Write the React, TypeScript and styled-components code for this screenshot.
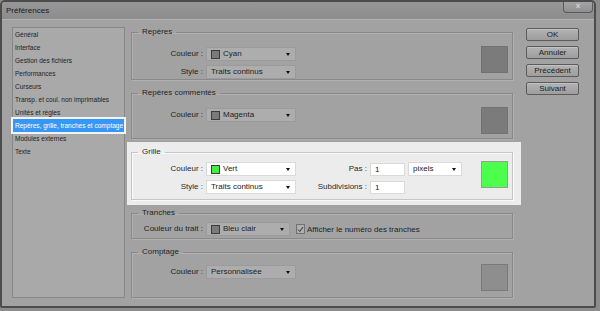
import React from 'react';
import styled, { createGlobalStyle } from 'styled-components';

const GlobalStyle = createGlobalStyle`
    html, body {
        margin: 0;
        padding: 0;
        background: #8d8d8d;
    }
    body {
        font-family: "Liberation Sans", Arial, sans-serif;
        color: #1e1e1e;
    }
`

const Window = styled.div`
    width: 596px;
    height: 308px;
    box-sizing: border-box;
    border: 2px solid #4c4c4c;
    border-radius: 5px 5px 2px 2px;
    background: #a2a2a2;
    display: flex;
    flex-direction: column;
    overflow: hidden;
`

const TitleBar = styled.div`
    height: 17px;
    flex: none;
    display: flex;
    align-items: flex-start;
    background: linear-gradient(#979797, #8c8c8c);
    border-bottom: 1px solid #b2b2b2;
`

const Title = styled.span`
    font-size: 8px;
    line-height: 9px;
    padding: 4px 0 0 4px;
    color: #1a1a1a;
`

const CloseButton = styled.div`
    margin: -2px 1px 0 auto;
    width: 30px;
    height: 13px;
    box-sizing: border-box;
    border: 1px solid #5a5a5a;
    border-top: none;
    border-radius: 0 0 4px 4px;
    background: linear-gradient(#a8a8a8, #8f8f8f);
    color: #e8e8e8;
    font-size: 8px;
    line-height: 11px;
    text-align: center;
`

const Body = styled.div`
    flex: 1;
    display: grid;
    grid-template-columns: 113px 382px 60px;
    column-gap: 6px;
    align-items: start;
    padding: 7px 0 0 10px;
`

const SideList = styled.div`
    height: 271px;
    box-sizing: border-box;
    border: 1px solid #878787;
    background: #a9a9a9;
    display: flex;
    flex-direction: column;
`

const ListItem = styled.div<{ $selected?: boolean }>`
    height: 13px;
    line-height: 13px;
    padding-left: 2px;
    font-size: 6.5px;
    white-space: nowrap;
    color: ${(p) => (p.$selected ? '#ffffff' : '#1e1e1e')};
    background: ${(p) => (p.$selected ? '#3797f5' : 'transparent')};
    box-shadow: ${(p) => (p.$selected ? '0 0 0 2px #f3f3f3' : 'none')};
    position: relative;
    z-index: ${(p) => (p.$selected ? 1 : 0)};
`

const Main = styled.div`
    margin-top: -1px;
    display: flex;
    flex-direction: column;
    gap: 7px;
`

const Group = styled.fieldset<{ $h: number; $pt: number; $lit?: boolean }>`
    margin: 0;
    min-width: 0;
    box-sizing: border-box;
    height: ${(p) => p.$h}px;
    padding: ${(p) => p.$pt}px 4px 0 0;
    border: 1px solid ${(p) => (p.$lit ? '#c6c6c6' : '#898989')};
    box-shadow: inset 1px 1px 0 ${(p) => (p.$lit ? '#fafafa' : '#b0b0b0')},
        1px 1px 0 ${(p) => (p.$lit ? '#fafafa' : '#b0b0b0')};
`

const Legend = styled.legend<{ $lit?: boolean }>`
    margin-left: 6px;
    padding: 0 4px;
    font-size: 8px;
    line-height: 12px;
    color: ${(p) => (p.$lit ? '#2a2a2a' : '#1e1e1e')};
`

const Spotlight = styled.div`
    margin: -4px -8px -5px -4px;
    padding: 4px 8px 5px 4px;
    background: #ececec;
    position: relative;
    z-index: 1;
`

const Label = styled.span<{ $lit?: boolean }>`
    font-size: 8px;
    line-height: 12px;
    text-align: right;
    white-space: nowrap;
    color: ${(p) => (p.$lit ? '#2a2a2a' : '#1e1e1e')};
`

const Form = styled.div`
    display: grid;
    grid-template-columns: 71px 90px 1fr 27px;
    column-gap: 3px;
    row-gap: 4px;
    align-items: center;

    & > ${Label} {
        grid-column: 1;
    }
`

const Select = styled.div<{ $w?: number; $lit?: boolean }>`
    width: ${(p) => p.$w ?? 90}px;
    height: 14px;
    box-sizing: border-box;
    display: flex;
    align-items: center;
    gap: 3px;
    padding: 0 5px 0 4px;
    background: ${(p) => (p.$lit ? '#ffffff' : '#adadad')};
    border: 1px solid ${(p) => (p.$lit ? '#dadada' : '#9b9b9b')};
    font-size: 8px;
    white-space: nowrap;
    color: ${(p) => (p.$lit ? '#222' : '#1e1e1e')};
`

const SelectText = styled.span`
    flex: 1;
    line-height: 12px;
`

const Arrow = styled.span`
    width: 0;
    height: 0;
    border-left: 2.5px solid transparent;
    border-right: 2.5px solid transparent;
    border-top: 3px solid #111;
`

const Chip = styled.span<{ $color: string }>`
    width: 9px;
    height: 9px;
    box-sizing: border-box;
    border: 1px solid #3c3c3c;
    background: ${(p) => p.$color};
    flex: none;
`

const Input = styled.div`
    width: 35px;
    height: 13px;
    box-sizing: border-box;
    padding-left: 4px;
    background: #fff;
    border: 1px solid #dadada;
    font-size: 8px;
    line-height: 11px;
    color: #222;
`

const Swatch = styled.div<{ $color: string; $border: string }>`
    grid-column: 4;
    grid-row: 1 / span 2;
    align-self: start;
    margin-top: -1px;
    width: 27px;
    height: 27px;
    box-sizing: border-box;
    background: ${(p) => p.$color};
    border: 1px solid ${(p) => p.$border};
`

const SideRow = styled.div`
    grid-column: 3;
    display: grid;
    grid-template-columns: 68px 35px 54px;
    column-gap: 3px;
    align-items: center;
`

const CheckRow = styled.label`
    grid-column: 3 / span 2;
    display: flex;
    align-items: center;
    gap: 2px;
    font-size: 8px;
    white-space: nowrap;
    margin-left: -3px;
`

const CheckBox = styled.span`
    width: 9px;
    height: 10px;
    box-sizing: border-box;
    border: 1px solid #727272;
    background: #afafaf;
    display: flex;
    align-items: center;
    justify-content: center;
`

const Buttons = styled.div`
    margin: 1px 0 0 7px;
    display: flex;
    flex-direction: column;
    gap: 5px;
`

const Button = styled.div`
    height: 13px;
    box-sizing: border-box;
    border: 1px solid #5b5b5b;
    border-radius: 2px;
    background: linear-gradient(#b3b3b3, #9d9d9d);
    box-shadow: inset 0 1px 0 #c2c2c2;
    font-size: 8px;
    line-height: 11px;
    text-align: center;
    color: #1c1c1c;
`

const items = [
    'Général',
    'Interface',
    'Gestion des fichiers',
    'Performances',
    'Curseurs',
    'Transp. et coul. non imprimables',
    'Unités et règles',
    'Repères, grille, tranches et comptage',
    'Modules externes',
    'Texte',
]

const App: React.FC = () => {
    return (
        <>
            <GlobalStyle />
            <Window>
                <TitleBar>
                    <Title>Préférences</Title>
                    <CloseButton>x</CloseButton>
                </TitleBar>
                <Body>
                    <SideList>
                        {items.map((item, i) => (
                            <ListItem key={item} $selected={i === 7}>{item}</ListItem>
                        ))}
                    </SideList>

                    <Main>
                        <Group $h={54} $pt={9}>
                            <Legend>Repères</Legend>
                            <Form>
                                <Label>Couleur :</Label>
                                <Select>
                                    <Chip $color="#7a7a7a" />
                                    <SelectText>Cyan</SelectText>
                                    <Arrow />
                                </Select>
                                <Label>Style :</Label>
                                <Select>
                                    <SelectText>Traits continus</SelectText>
                                    <Arrow />
                                </Select>
                                <Swatch $color="#7b7b7b" $border="#727272" />
                            </Form>
                        </Group>

                        <Group $h={52} $pt={9}>
                            <Legend>Repères commentés</Legend>
                            <Form>
                                <Label>Couleur :</Label>
                                <Select>
                                    <Chip $color="#7a7a7a" />
                                    <SelectText>Magenta</SelectText>
                                    <Arrow />
                                </Select>
                                <Swatch $color="#7b7b7b" $border="#727272" />
                            </Form>
                        </Group>

                        <Spotlight>
                            <Group $h={54} $pt={4} $lit>
                                <Legend $lit>Grille</Legend>
                                <Form>
                                    <Label $lit>Couleur :</Label>
                                    <Select $lit>
                                        <Chip $color="#45ee45" />
                                        <SelectText>Vert</SelectText>
                                        <Arrow />
                                    </Select>
                                    <SideRow>
                                        <Label $lit>Pas :</Label>
                                        <Input>1</Input>
                                        <Select $lit $w={54}>
                                            <SelectText>pixels</SelectText>
                                            <Arrow />
                                        </Select>
                                    </SideRow>
                                    <Label $lit>Style :</Label>
                                    <Select $lit>
                                        <SelectText>Traits continus</SelectText>
                                        <Arrow />
                                    </Select>
                                    <SideRow>
                                        <Label $lit>Subdivisions :</Label>
                                        <Input>1</Input>
                                    </SideRow>
                                    <Swatch $color="#4cff4c" $border="#9a9a9a" />
                                </Form>
                            </Group>
                        </Spotlight>

                        <Group $h={32} $pt={3}>
                            <Legend>Tranches</Legend>
                            <Form>
                                <Label>Couleur du trait :</Label>
                                <Select $w={84}>
                                    <Chip $color="#7a7a7a" />
                                    <SelectText>Bleu clair</SelectText>
                                    <Arrow />
                                </Select>
                                <CheckRow>
                                    <CheckBox>
                                        <svg width="7" height="7" viewBox="0 0 7 7">
                                            <path d="M1 3.5 L2.8 5.5 L6 1" fill="none" stroke="#333" strokeWidth="1" />
                                        </svg>
                                    </CheckBox>
                                    Afficher le numéro des tranches
                                </CheckRow>
                            </Form>
                        </Group>

                        <Group $h={52} $pt={7}>
                            <Legend>Comptage</Legend>
                            <Form>
                                <Label>Couleur :</Label>
                                <Select>
                                    <SelectText>Personnalisée</SelectText>
                                    <Arrow />
                                </Select>
                                <Swatch $color="#8e8e8e" $border="#7a7a7a" />
                            </Form>
                        </Group>
                    </Main>

                    <Buttons>
                        <Button>OK</Button>
                        <Button>Annuler</Button>
                        <Button>Précédent</Button>
                        <Button>Suivant</Button>
                    </Buttons>
                </Body>
            </Window>
        </>
    )
}

export default App;
